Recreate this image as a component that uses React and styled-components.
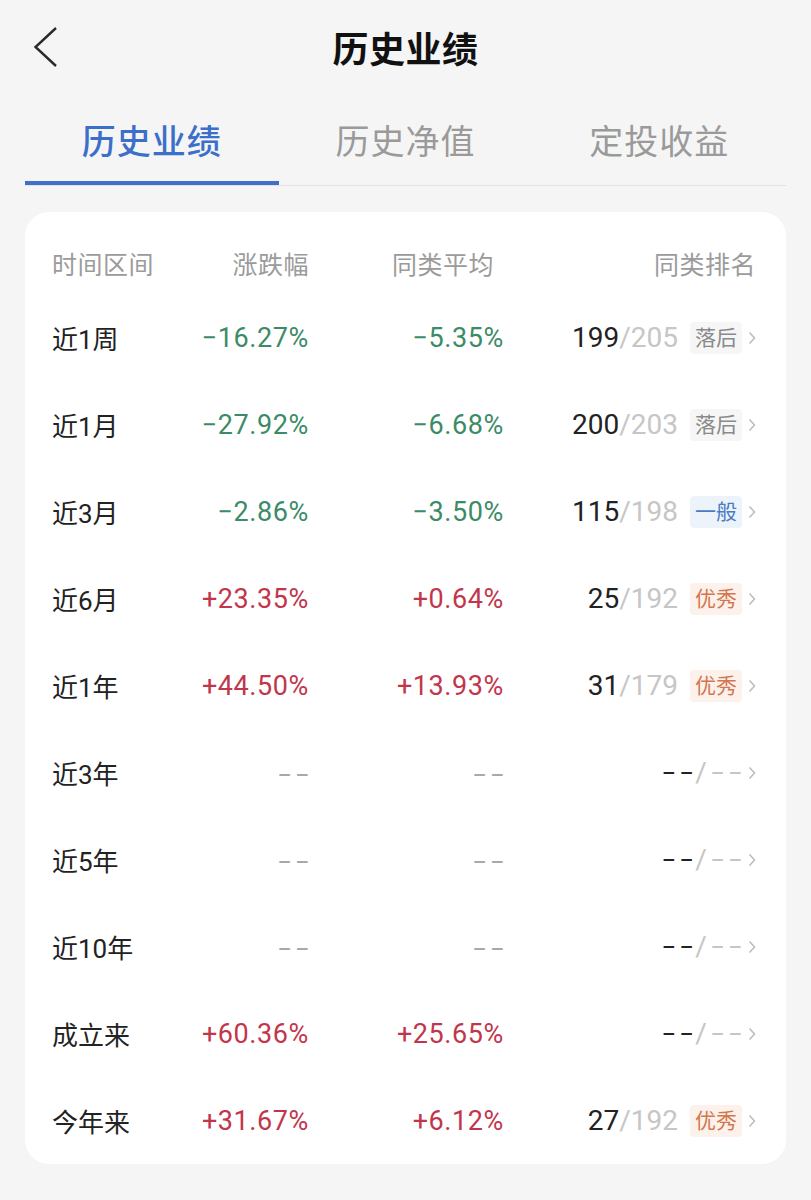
import styled, { createGlobalStyle } from 'styled-components';

const GlobalStyle = createGlobalStyle`
  html, body {
    margin: 0;
    padding: 0;
    background: #f5f5f5;
  }
  body {
    font-family: Roboto, 'Noto Sans CJK SC', sans-serif;
    color: #222;
  }
`;

const Page = styled.div`
  width: 811px;
  min-height: 1200px;
  background: #f5f5f5;
`;

const NavBar = styled.div`
  position: relative;
  height: 94px;
  display: flex;
  align-items: center;
  justify-content: center;
`;

const BackButton = styled.button`
  position: absolute;
  left: 33px;
  top: 26px;
  width: 26px;
  height: 42px;
  border: 0;
  padding: 0;
  background: none;
  display: flex;
  align-items: center;
  justify-content: flex-start;
`;

const Title = styled.h1`
  margin: 0;
  font-size: 36px;
  font-weight: 700;
  color: #111;
  letter-spacing: 0.5px;
`;

const Tabs = styled.div`
  margin: 0 25px;
  display: grid;
  grid-template-columns: repeat(3, 1fr);
  border-bottom: 1px solid #e2e2e2;
`;

const Tab = styled.div`
  height: 91px;
  display: flex;
  align-items: center;
  justify-content: center;
  font-size: 34px;
  font-weight: ${(p) => (p.$active ? 500 : 400)};
  color: ${(p) => (p.$active ? '#3c6fca' : '#9a9a9a')};
  box-shadow: ${(p) => (p.$active ? 'inset 0 -4px 0 #3f6fc6' : 'none')};
  letter-spacing: 1px;
`;

const Card = styled.div`
  margin: 26px 25px 0;
  background: #fff;
  border-radius: 24px;
  padding: 20px 30px 0 27px;
`;

const Row = styled.div`
  display: grid;
  grid-template-columns: 130px 127px 195px 1fr;
  align-items: center;
  height: ${(p) => (p.$head ? '62px' : '87px')};
`;

const HeadCell = styled.div`
  font-size: 25px;
  color: #9b9b9b;
  text-align: ${(p) => (p.$left ? 'left' : 'right')};
  padding-right: ${(p) => (p.$inset ? '10px' : '0')};
  letter-spacing: 0.5px;
`;

const Label = styled.div`
  font-size: 26px;
  color: #222;
`;

const Value = styled.div`
  text-align: right;
  font-size: 27px;
  letter-spacing: 0.6px;
  color: ${(p) => (p.$tone === 'down' ? '#3b8c66' : p.$tone === 'up' ? '#c2364c' : '#a8a8a8')};
`;

// empty value placeholder: two short dashes
const Dash = styled.span`
  font-size: 21px;
  font-weight: 500;
  letter-spacing: 0;
  white-space: pre;
  color: ${(p) => p.$color || '#a8a8a8'};
`;

const Rank = styled.div`
  display: flex;
  align-items: center;
  justify-content: flex-end;
`;

const RankNum = styled.span`
  font-size: 28px;
  color: #222;
`;

const RankTotal = styled.span`
  font-size: 28px;
  color: #c6c6c6;
  margin: ${(p) => (p.$gap ? '0 4px 0 2px' : '0')};
`;

const Tag = styled.span`
  margin-left: 12px;
  padding: 2px 5px;
  font-size: 21px;
  line-height: 28px;
  border-radius: 4px;
  color: ${(p) => p.$color};
  background: ${(p) => p.$bg};
`;

const Chevron = styled.svg`
  margin-left: 6px;
  flex: none;
`;

const TAGS = {
  落后: { color: '#8a8a8a', bg: '#f6f6f6' },
  一般: { color: '#4b7cc0', bg: '#edf3fb' },
  优秀: { color: '#d2774f', bg: '#fdf1eb' },
};

const rows = [
  { name: '近1周', chg: '-16.27%', avg: '-5.35%', rank: '199', total: '205', tag: '落后' },
  { name: '近1月', chg: '-27.92%', avg: '-6.68%', rank: '200', total: '203', tag: '落后' },
  { name: '近3月', chg: '-2.86%', avg: '-3.50%', rank: '115', total: '198', tag: '一般' },
  { name: '近6月', chg: '+23.35%', avg: '+0.64%', rank: '25', total: '192', tag: '优秀' },
  { name: '近1年', chg: '+44.50%', avg: '+13.93%', rank: '31', total: '179', tag: '优秀' },
  { name: '近3年', chg: '--', avg: '--', rank: '--', total: '--' },
  { name: '近5年', chg: '--', avg: '--', rank: '--', total: '--' },
  { name: '近10年', chg: '--', avg: '--', rank: '--', total: '--' },
  { name: '成立来', chg: '+60.36%', avg: '+25.65%', rank: '--', total: '--' },
  { name: '今年来', chg: '+31.67%', avg: '+6.12%', rank: '27', total: '192', tag: '优秀' },
];

const DASHES = '\u2013\u2009\u2013';

function tone(v) {
  if (v.startsWith('+')) return 'up';
  if (v.startsWith('-') && v !== '--') return 'down';
  return 'none';
}

function Cell({ value }) {
  if (value === '--') return <Value><Dash>{DASHES}</Dash></Value>;
  const text = value.startsWith('-') ? '\u2212' + value.slice(1) : value;
  return <Value $tone={tone(value)}>{text}</Value>;
}

export default function App() {
  return (
    <Page>
      <GlobalStyle />
      <NavBar>
        <BackButton>
          <svg width="26" height="42" viewBox="0 0 26 42">
            <path d="M23 2 L2.5 21 L23 40" fill="none" stroke="#2a2a2a" strokeWidth="2.4" />
          </svg>
        </BackButton>
        <Title>历史业绩</Title>
      </NavBar>

      <Tabs>
        <Tab $active>历史业绩</Tab>
        <Tab>历史净值</Tab>
        <Tab>定投收益</Tab>
      </Tabs>

      <Card>
        <Row $head>
          <HeadCell $left>时间区间</HeadCell>
          <HeadCell>涨跌幅</HeadCell>
          <HeadCell $inset>同类平均</HeadCell>
          <HeadCell>同类排名</HeadCell>
        </Row>
        {rows.map((r) => (
          <Row key={r.name}>
            <Label>{r.name}</Label>
            <Cell value={r.chg} />
            <Cell value={r.avg} />
            <Rank>
              {r.rank === '--' ? (
                <>
                  <Dash $color="#222">{DASHES}</Dash>
                  <RankTotal $gap>/</RankTotal>
                  <Dash $color="#c6c6c6">{DASHES}</Dash>
                </>
              ) : (
                <>
                  <RankNum>{r.rank}</RankNum>
                  <RankTotal>/{r.total}</RankTotal>
                </>
              )}
              {r.tag && (
                <Tag $color={TAGS[r.tag].color} $bg={TAGS[r.tag].bg}>
                  {r.tag}
                </Tag>
              )}
              <Chevron width="8" height="14" viewBox="0 0 8 14">
                <path d="M1.5 1.5 L6.5 7 L1.5 12.5" fill="none" stroke="#bdbdbd" strokeWidth="1.6" />
              </Chevron>
            </Rank>
          </Row>
        ))}
      </Card>
    </Page>
  );
}
